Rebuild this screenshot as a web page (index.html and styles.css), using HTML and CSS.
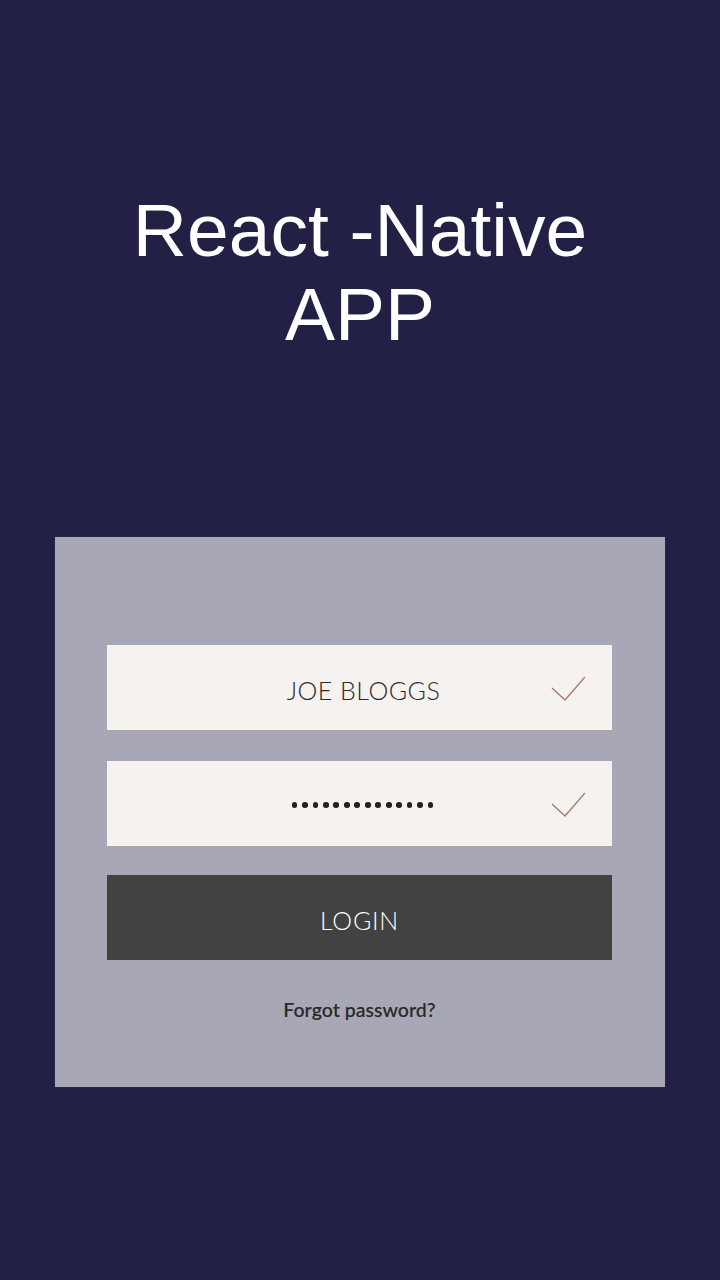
FILE: index.html
```html
<!DOCTYPE html>
<html>
<head>
<meta charset="utf-8">
<link rel="stylesheet" href="styles.css">
</head>
<body>
<main class="screen">
  <h1 class="title">React -Native<br>APP</h1>
  <section class="card">
    <div class="field">
      <span class="spacer"></span>
      <span class="value">JOE BLOGGS</span>
      <span class="check"><svg width="36" height="26" viewBox="0 0 36 26"><path d="M3 12 L16 24 L36 1" fill="none" stroke="#a67d6b" stroke-width="1.4"/></svg></span>
    </div>
    <div class="field field-pw">
      <span class="spacer"></span>
      <span class="dots"><i></i><i></i><i></i><i></i><i></i><i></i><i></i><i></i><i></i><i></i><i></i><i></i><i></i><i></i></span>
      <span class="check"><svg width="36" height="26" viewBox="0 0 36 26"><path d="M3 12 L16 24 L36 1" fill="none" stroke="#a67d6b" stroke-width="1.4"/></svg></span>
    </div>
    <button class="login">LOGIN</button>
    <p class="forgot">Forgot password?</p>
  </section>
</main>
</body>
</html>
```
FILE: styles.css
```css
html, body {
  margin: 0;
  padding: 0;
  background: #232045;
}
.screen {
  width: 720px;
  height: 1280px;
  display: flex;
  flex-direction: column;
  align-items: center;
}
.title {
  margin: 188px 0 0 0;
  font-family: "Liberation Sans", Arial, sans-serif;
  font-weight: 400;
  font-size: 75px;
  line-height: 84px;
  color: #ffffff;
  text-align: center;
}
.card {
  margin-top: 181px;
  width: 610px;
  height: 550px;
  box-sizing: border-box;
  background: #a7a7b6;
  padding: 108px 53px 0 52px;
  display: flex;
  flex-direction: column;
}
.field {
  height: 85px;
  background: #f5f2ef;
  display: grid;
  grid-template-columns: 1fr auto 1fr;
  align-items: center;
}
.field-pw {
  margin-top: 31px;
}
.value {
  font-family: "Lato", sans-serif;
  font-weight: 300;
  font-size: 25px;
  letter-spacing: 0.5px;
  color: #2a2a2a;
  padding-left: 8px;
  padding-top: 5px;
}
.check {
  justify-self: end;
  padding-right: 27px;
  display: flex;
}
.field .check svg {
  margin-top: 3px;
}
.field-pw .check svg {
  margin-top: 2px;
}
.dots {
  display: flex;
  gap: 4.9px;
  padding-left: 6px;
  padding-top: 3px;
}
.dots i {
  display: block;
  width: 5.6px;
  height: 5.6px;
  border-radius: 50%;
  background: #222;
}
.login {
  margin-top: 29px;
  height: 85px;
  border: 0;
  background: #424242;
  color: #ffffff;
  font-family: "Lato", sans-serif;
  font-weight: 300;
  font-size: 25px;
  letter-spacing: 0.8px;
  padding: 4px 0 0 0;
}
.forgot {
  margin: 38px 0 0 0;
  text-align: center;
  font-family: "Lato", sans-serif;
  font-weight: 600;
  font-size: 19.5px;
  color: #2a2a2a;
}
```
